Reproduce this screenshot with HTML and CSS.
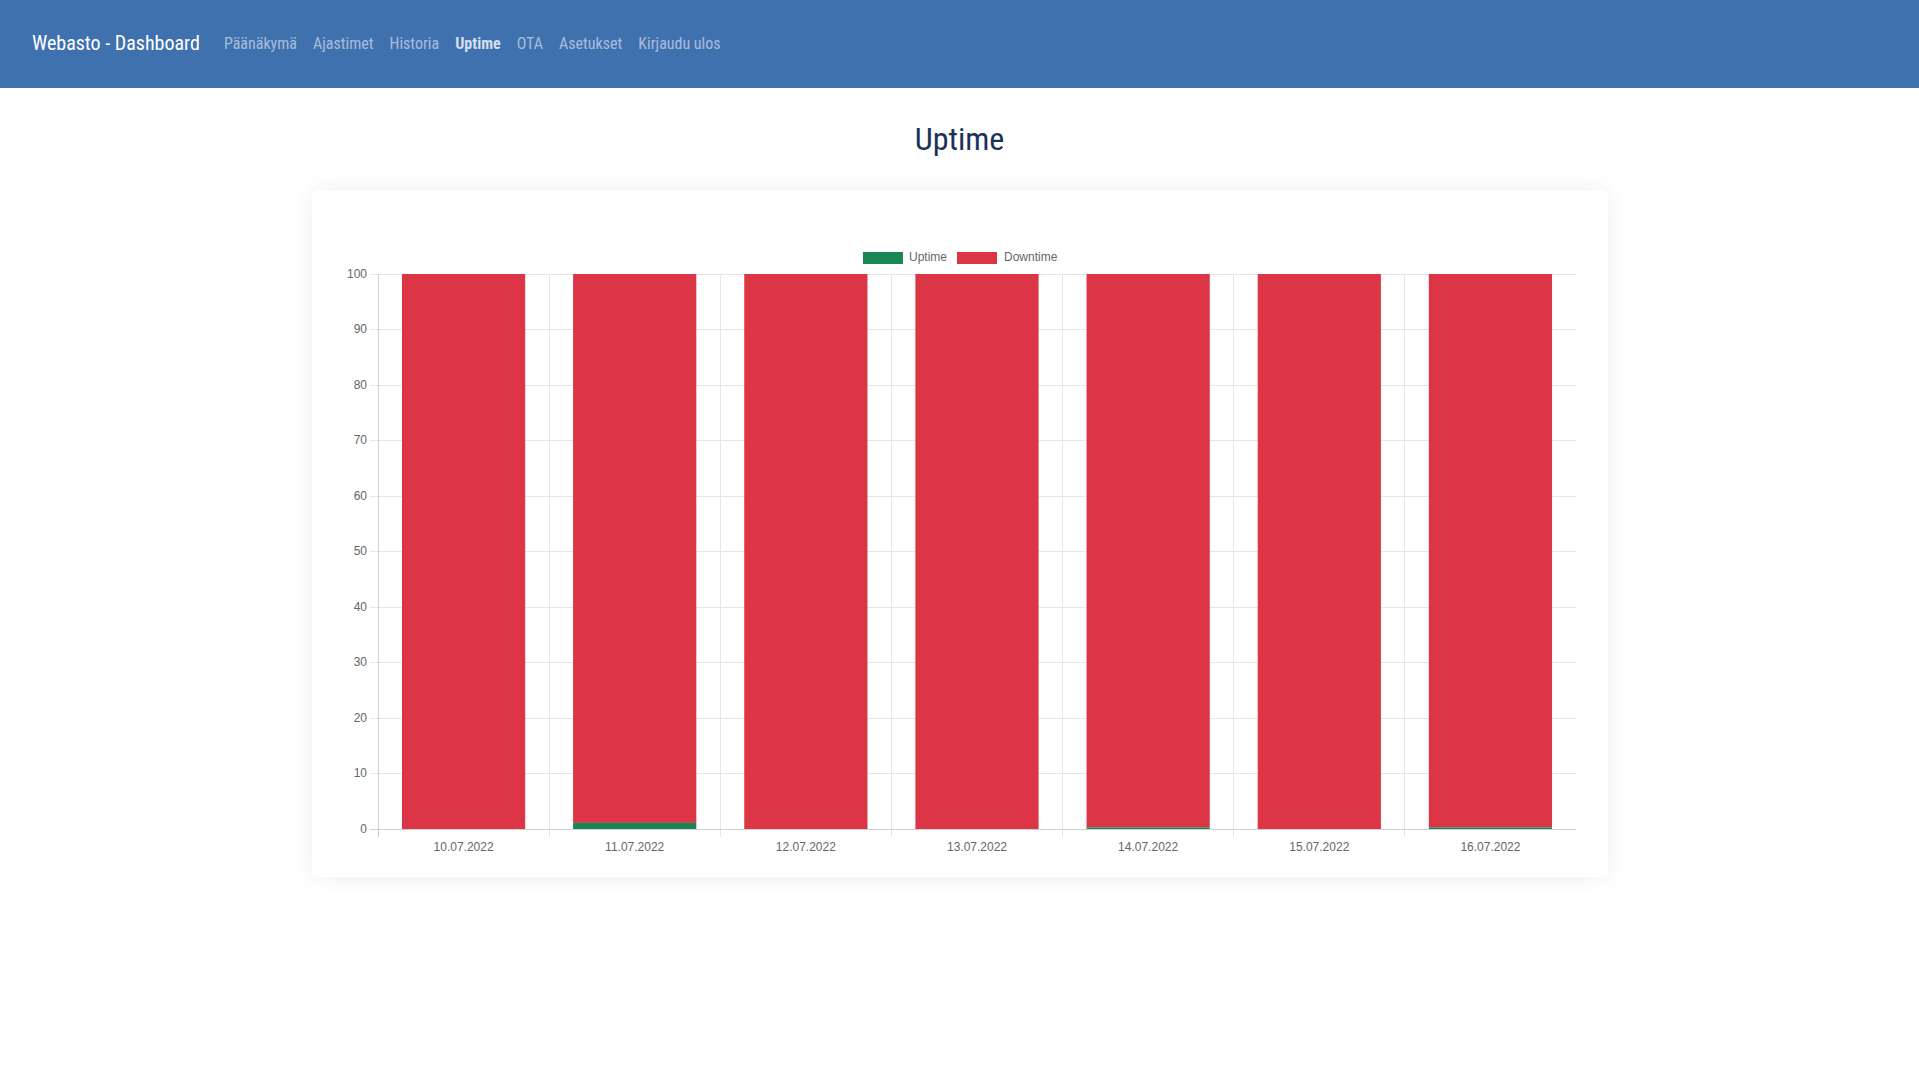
FILE: index.html
```html
<!DOCTYPE html>
<html lang="fi">
<head>
<meta charset="utf-8">
<title>Webasto - Dashboard</title>
<link rel="stylesheet" href="styles.css">
</head>
<body>
<nav class="navbar">
  <a class="brand" href="#">Webasto - Dashboard</a>
  <ul class="nav">
    <li><a class="nav-link" href="#">Päänäkymä</a></li>
    <li><a class="nav-link" href="#">Ajastimet</a></li>
    <li><a class="nav-link" href="#">Historia</a></li>
    <li><a class="nav-link active" href="#">Uptime</a></li>
    <li><a class="nav-link" href="#">OTA</a></li>
    <li><a class="nav-link" href="#">Asetukset</a></li>
    <li><a class="nav-link" href="#">Kirjaudu ulos</a></li>
  </ul>
</nav>
<main class="container">
  <h2 class="title">Uptime</h2>
  <div class="card">
    <svg class="chart" width="1296" height="687" viewBox="0 0 1296 687" xmlns="http://www.w3.org/2000/svg">
      <g class="legend">
        <rect x="551" y="62" width="40" height="12" fill="#198754"/>
        <text x="597" y="71">Uptime</text>
        <rect x="645" y="62" width="40" height="12" fill="#dc3545"/>
        <text x="692" y="71">Downtime</text>
      </g>
      <g class="grid" stroke="#e6e6e6" stroke-width="1">
        <line x1="58" x2="1264" y1="84.5" y2="84.5"/>
        <line x1="58" x2="1264" y1="139.5" y2="139.5"/>
        <line x1="58" x2="1264" y1="195.5" y2="195.5"/>
        <line x1="58" x2="1264" y1="250.5" y2="250.5"/>
        <line x1="58" x2="1264" y1="306.5" y2="306.5"/>
        <line x1="58" x2="1264" y1="361.5" y2="361.5"/>
        <line x1="58" x2="1264" y1="417.5" y2="417.5"/>
        <line x1="58" x2="1264" y1="472.5" y2="472.5"/>
        <line x1="58" x2="1264" y1="528.5" y2="528.5"/>
        <line x1="58" x2="1264" y1="583.5" y2="583.5"/>
        <line x1="237.5" x2="237.5" y1="84" y2="647"/>
        <line x1="408.5" x2="408.5" y1="84" y2="647"/>
        <line x1="579.5" x2="579.5" y1="84" y2="647"/>
        <line x1="750.5" x2="750.5" y1="84" y2="647"/>
        <line x1="921.5" x2="921.5" y1="84" y2="647"/>
        <line x1="1092.5" x2="1092.5" y1="84" y2="647"/>
      </g>
      <g class="axis" stroke="#d0d0d0" stroke-width="1">
        <line x1="66.5" x2="66.5" y1="84" y2="647"/>
        <line x1="58" x2="1264" y1="639.5" y2="639.5"/>
      </g>
      <g class="bars">
        <rect x="89.96" y="84" width="123.22" height="555" fill="#dc3545"/>
        <rect x="261.1" y="84" width="123.22" height="548.9" fill="#dc3545"/>
        <rect x="261.1" y="632.9" width="123.22" height="6.1" fill="#198754"/>
        <rect x="432.25" y="84" width="123.22" height="555" fill="#dc3545"/>
        <rect x="603.39" y="84" width="123.22" height="555" fill="#dc3545"/>
        <rect x="774.53" y="84" width="123.22" height="553.3" fill="#dc3545"/>
        <rect x="774.53" y="637.3" width="123.22" height="1.7" fill="#198754"/>
        <rect x="945.68" y="84" width="123.22" height="555" fill="#dc3545"/>
        <rect x="1116.82" y="84" width="123.22" height="553.3" fill="#dc3545"/>
        <rect x="1116.82" y="637.3" width="123.22" height="1.7" fill="#198754"/>
      </g>
      <g class="ylabels">
        <text x="55" y="87.5">100</text>
        <text x="55" y="143">90</text>
        <text x="55" y="198.5">80</text>
        <text x="55" y="254">70</text>
        <text x="55" y="309.5">60</text>
        <text x="55" y="365">50</text>
        <text x="55" y="420.5">40</text>
        <text x="55" y="476">30</text>
        <text x="55" y="531.5">20</text>
        <text x="55" y="587">10</text>
        <text x="55" y="642.5">0</text>
      </g>
      <g class="xlabels">
        <text x="151.57" y="661">10.07.2022</text>
        <text x="322.71" y="661">11.07.2022</text>
        <text x="493.86" y="661">12.07.2022</text>
        <text x="665" y="661">13.07.2022</text>
        <text x="836.14" y="661">14.07.2022</text>
        <text x="1007.29" y="661">15.07.2022</text>
        <text x="1178.43" y="661">16.07.2022</text>
      </g>
    </svg>
  </div>
</main>
</body>
</html>
```

FILE: styles.css
```css
* { box-sizing: border-box; }

body {
  margin: 0;
  background: #ffffff;
  font-family: Roboto, "Noto Sans", "Liberation Sans", sans-serif;
}

.navbar {
  height: 88px;
  background: #3f71ae;
  display: flex;
  align-items: center;
  padding: 0 32px 2px;
}

.brand {
  font-size: 20px;
  color: #ffffff;
  text-decoration: none;
  font-stretch: 85%;
  margin-right: 16px;
}

.nav {
  list-style: none;
  margin: 0;
  padding: 0;
  display: flex;
}

.nav-link {
  display: block;
  padding: 8px;
  font-size: 16px;
  color: rgba(255, 255, 255, 0.55);
  text-decoration: none;
  font-stretch: 85%;
}

.nav-link.active {
  color: rgba(255, 255, 255, 0.78);
  font-weight: 700;
}

.container {
  max-width: 1320px;
  margin: 0 auto;
  padding: 0 12px 40px;
}

.title {
  margin: 32px 0 32px;
  text-align: center;
  font-size: 32px;
  line-height: 1.2;
  font-weight: 400;
  color: #1b3257;
  font-stretch: 85%;
}

.card {
  background: #ffffff;
  border-radius: 6px;
  box-shadow: 0 0 22px rgba(0, 0, 0, 0.07);
  height: 687px;
}

.chart {
  display: block;
  font-family: "Liberation Sans", Arial, sans-serif;
  font-size: 12px;
}

.chart text { fill: #666666; }
.ylabels text { text-anchor: end; }
.xlabels text { text-anchor: middle; }
```
